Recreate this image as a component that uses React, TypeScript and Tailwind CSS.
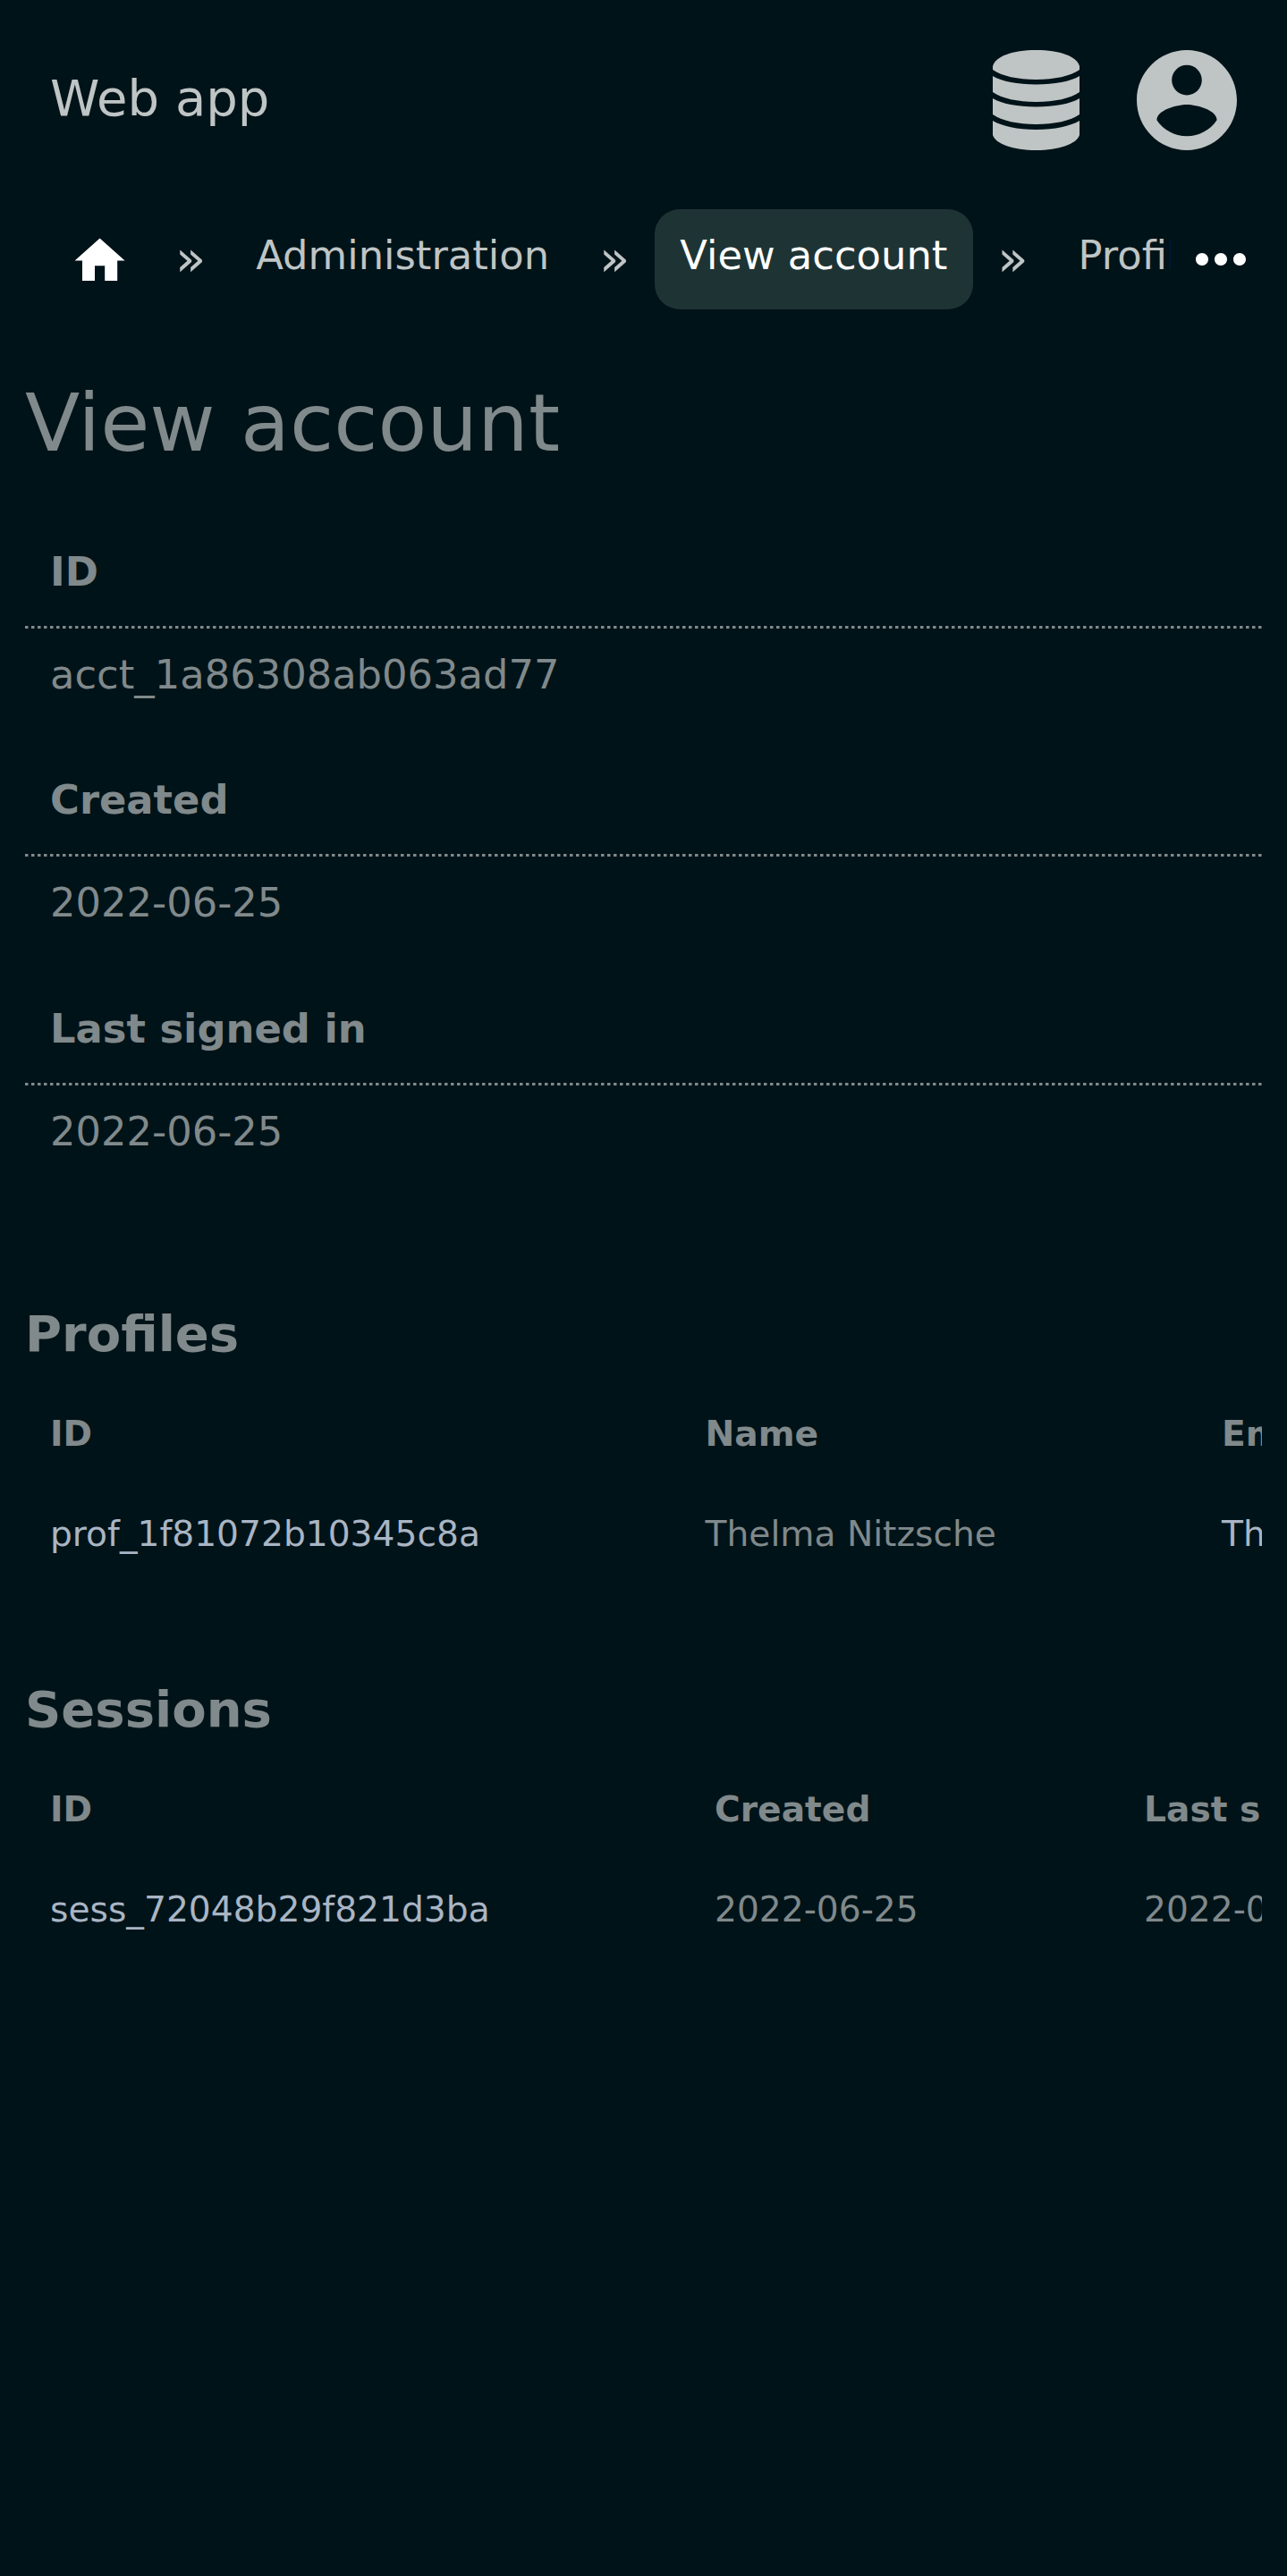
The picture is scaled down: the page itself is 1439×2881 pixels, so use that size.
import { MdHome, MdMoreHoriz } from "react-icons/md";

const details = [
  ["ID", "acct_1a86308ab063ad77"],
  ["Created", "2022-06-25"],
  ["Last signed in", "2022-06-25"],
];

function DatabaseIcon() {
  return (
    <svg viewBox="0 0 97 112" className="mr-[53px] h-[112px] w-[97px]" fill="currentColor">
      <path d="M0 18C3 7 22 0 48.500 0S94 7 97 18V22C87 29 69 33 48.500 33S10 29 0 22Z" />
      <path d="M0 29C10 35 28 38.500 48.500 38.500S87 35 97 29V47C87 54 69 58 48.500 58S10 54 0 47Z" />
      <path d="M0 54C10 60 28 63.500 48.500 63.500S87 60 97 54V72C87 79 69 83 48.500 83S10 79 0 72Z" />
      <path d="M0 79C10 85 28 89 48.500 89S87 85 97 79V95C94 105 74 112 48.500 112S3 105 0 95Z" />
    </svg>
  );
}

function AccountIcon() {
  return (
    <svg viewBox="2 2 20 20" className="size-[112px]" fill="currentColor">
      <path d="M12 2C6.48 2 2 6.48 2 12s4.48 10 10 10 10-4.48 10-10S17.52 2 12 2zm0 3c1.66 0 3 1.34 3 3s-1.34 3-3 3-3-1.34-3-3 1.34-3 3-3zm0 14.200c-2.500 0-4.710-1.280-6-3.220.03-1.990 4-3.080 6-3.080 1.990 0 5.970 1.090 6 3.080-1.290 1.940-3.500 3.220-6 3.220z" />
    </svg>
  );
}

function Table({ title, cols, head, row, links }: { title: string; cols: string; head: string[]; row: string[]; links: number[] }) {
  return (
    <section className="h-[419.5px] overflow-hidden">
      <h2 className="text-[56px] leading-[112px] font-bold">{title}</h2>
      <div className={`grid w-[1900px] pl-[28px] text-[39.2px] leading-[112px] ${cols}`}>
        {head.map((h) => (
          <span key={h} className="font-bold">{h}</span>
        ))}
        {row.map((r, i) => (
          <span key={i} className={links.includes(i) ? "text-[#a9b5c4]" : ""}>{r}</span>
        ))}
      </div>
    </section>
  );
}

export default function App() {
  return (
    <div className="h-[2881px] w-[1439px] overflow-hidden bg-[#001318] font-['DejaVu_Sans',sans-serif] text-[#80898b]">
      <header className="flex h-[224px] items-center justify-between px-[56px] text-[#bfc4c5]">
        <span className="pb-[4px] text-[56px] leading-none">Web app</span>
        <div className="flex items-center">
          <DatabaseIcon />
          <div className="ml-[11px]">
            <AccountIcon />
          </div>
        </div>
      </header>
      <nav className="flex h-[132px] items-center pl-[56px] text-[44.8px] whitespace-nowrap text-[#bfc4c5]">
        <div className="flex w-[1253px] shrink-0 items-center gap-[28px] overflow-hidden">
          <span className="flex h-[112px] w-[112px] shrink-0 items-center justify-center pt-[4px] text-white">
            <MdHome className="size-[67.2px]" />
          </span>
          <span className="pb-[2px] text-[56px]">»</span>
          <span className="px-[28px] pb-[8px]">Administration</span>
          <span className="pb-[2px] text-[56px]">»</span>
          <span className="-mr-px h-[112px] rounded-[28px] bg-[#1e3434] pr-[29px] pl-[28px] leading-[104px] text-white">View account</span>
          <span className="pb-[2px] text-[56px]">»</span>
          <span className="px-[28px] pb-[8px]">Profiles</span>
        </div>
        <MdMoreHoriz className="ml-[14px] size-[84px] shrink-0 text-white" />
      </nav>
      <main className="px-[28px]">
        <h1 className="pt-[61px] text-[89.6px] leading-[112px]">View account</h1>
        <dl className="mt-[54.9px]">
          {details.map(([k, v]) => (
            <div key={k} className="h-[255.5px] text-[44.8px] leading-[112px]">
              <dt className="h-[116px] px-[28px] font-bold">{k}</dt>
              <dd className="h-[3px] bg-[repeating-linear-gradient(90deg,#80898b_0_3px,#404e52_3px_4px,transparent_4px_7px)]" />
              <dd className="-mt-[4px] px-[28px]">{v}</dd>
            </div>
          ))}
        </dl>
        <div className="mt-[86px]">
          <Table
            title="Profiles"
            cols="grid-cols-[732.5px_577.5px_1fr]"
            head={["ID", "Name", "Email"]}
            row={["prof_1f81072b10345c8a", "Thelma Nitzsche", "Thelma"]}
            links={[0, 2]}
          />
          <Table
            title="Sessions"
            cols="grid-cols-[743px_480px_1fr]"
            head={["ID", "Created", "Last signed in"]}
            row={["sess_72048b29f821d3ba", "2022-06-25", "2022-06-25"]}
            links={[0]}
          />
        </div>
      </main>
    </div>
  );
}
